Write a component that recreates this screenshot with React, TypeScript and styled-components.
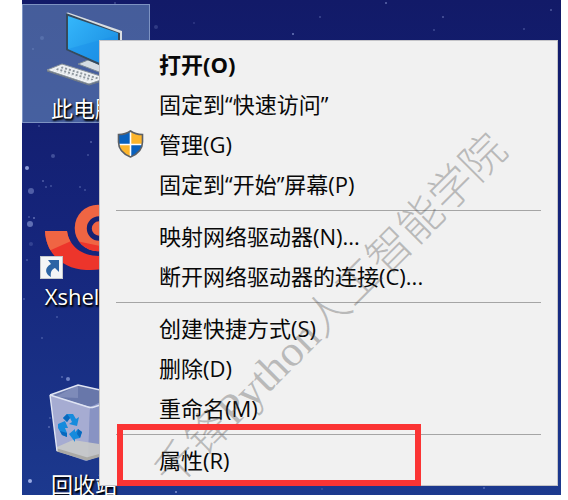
import React from "react";
import styled, { createGlobalStyle } from "styled-components";

const GlobalStyle = createGlobalStyle`
  * { box-sizing: border-box; }
  body {
    margin: 0;
    background: #fff;
    font-family: "Open Sans", "Noto Sans CJK SC", sans-serif;
    font-size: 22px;
  }
`;

const Desktop = styled.main`
  position: relative;
  height: calc(100vh - 5px);
  margin: 0 7px 5px 22px;
  padding-top: 4px;
  overflow: hidden;
  background: linear-gradient(#121a68, #15247a 45%, #1c398e);
`;

const Snow = styled.svg`
  position: absolute;
  inset: 0;
  width: 100%;
  height: 100%;
`;

const IconColumn = styled.div`
  position: relative;
  display: flex;
  flex-direction: column;
  align-items: flex-start;
  gap: 69px;
`;

const Shortcut = styled.button<{ $selected?: boolean }>`
  display: flex;
  flex-direction: column;
  align-items: flex-start;
  flex: none;
  width: 128px;
  padding: 0;
  border: 0;
  color: #fff;
  font: inherit;
  line-height: 30px;
  text-shadow: 1px 1px 2px #000, 1px 2px 2px #000;
  background: ${(p) => (p.$selected ? "rgba(140, 185, 225, 0.42)" : "transparent")};
  box-shadow: ${(p) => (p.$selected ? "inset 0 0 0 1px #7d93c2" : "none")};

  svg { display: block; width: 128px; height: 89px; }
`;

const ShortcutLabel = styled.span`
  align-self: center;
  padding-right: 4px;
`;

const Menu = styled.div`
  position: absolute;
  top: 40px;
  left: 77px;
  right: 3px;
  padding: 5px 0 4px;
  border: 1px solid #c4c4c8;
  background: #f1f1f1;
`;

const Group = styled.div`
  display: flex;
  flex-direction: column;
  gap: 1px;
`;

const Item = styled.button<{ $strong?: boolean }>`
  display: grid;
  grid-template-columns: 59px 1fr;
  align-items: center;
  height: 39px;
  padding: 0 0 4px;
  border: 0;
  background: transparent;
  color: #080808;
  font: inherit;
  font-weight: ${(p) => (p.$strong ? 700 : 400)};
  line-height: 30px;
  text-align: left;
  white-space: nowrap;
`;

const IconCell = styled.span`
  display: flex;
  padding-left: 17px;
`;

const Divider = styled.hr`
  height: 1px;
  margin: 5px 16px 7px;
  border: 0;
  background: #a5a5a5;
`;

const Watermark = styled.div`
  position: absolute;
  top: 270px;
  left: 231px;
  transform: translate(-50%, -50%) rotate(-45deg);
  color: rgba(80, 80, 80, 0.35);
  font-family: "Liberation Serif", "Noto Sans CJK SC", serif;
  font-size: 44px;
  font-weight: 300;
  line-height: 48px;
  white-space: nowrap;
  pointer-events: none;
`;

const Highlight = styled.div`
  position: absolute;
  left: 17px;
  bottom: -1px;
  width: 304px;
  height: 62px;
  border: 6px solid #fb3434;
  pointer-events: none;
`;

const flakes = [
  [5, 168, 2, 0.8], [9, 191, 3, 0.4], [8, 224, 3, 0.5], [12, 218, 1, 0.5],
  [7, 217, 1, 0.3], [31, 156, 2, 0.3], [21, 181, 1, 0.4], [24, 187, 1, 0.3],
  [29, 186, 1, 0.3], [58, 187, 1, 0.3], [63, 190, 1, 0.3], [9, 244, 2, 0.2],
  [5, 260, 1, 0.3], [17, 126, 1, 0.3], [69, 142, 1, 0.4], [66, 155, 1, 0.3],
  [2, 299, 1, 0.3], [20, 338, 1, 0.3], [35, 317, 1, 0.3], [46, 379, 2, 0.6],
  [40, 377, 1, 0.4], [27, 427, 1, 0.4], [28, 418, 1, 0.3], [8, 481, 2, 0.9],
  [20, 38, 2, 0.2], [11, 49, 1, 0.25], [93, 3, 1, 0.3], [134, 27, 2, 0.2],
  [172, 23, 1, 0.2], [271, 34, 1, 0.6], [298, 17, 1, 0.3], [364, 3, 1, 0.5],
  [412, 30, 1, 0.3], [421, 17, 1, 0.4], [502, 29, 1, 0.3], [529, 10, 1, 0.4],
  [154, 492, 1, 0.7], [300, 489, 1, 0.2], [462, 488, 1, 0.4],
];

const Computer = () => (
  <svg viewBox="0 0 128 89" aria-hidden="true">
    <defs>
      <linearGradient id="screen" x1="0" y1="0" x2="1" y2="1">
        <stop offset="0" stopColor="#35b7fb" />
        <stop offset="1" stopColor="#1686dd" />
      </linearGradient>
      <pattern id="keys" width="4" height="3" patternUnits="userSpaceOnUse" patternTransform="rotate(17)">
        <rect width="4" height="3" fill="#eceff2" />
        <rect width="2" height="2" fill="#8e979e" />
      </pattern>
    </defs>
    <path d="M56 60 66 56 90 65V73L77 68Z" fill="#d5dce3" stroke="#7c8993" />
    <path d="M44 9 99 27V71L44 46Z" fill="#364a5c" />
    <path d="M44 9 46 8.5 100 27V71L98 70V29Z" fill="#d9dee2" />
    <path d="M46 12 96 29V67L46 45Z" fill="url(#screen)" />
    <path d="M46 45 96 31V67Z" fill="#1b8fe8" opacity=".45" />
    <path d="M25 66 40 60 85 74 67 80Z" fill="#eef1f4" stroke="#8b949b" />
    <path d="M31 66 41 62 79 74 67 77Z" fill="url(#keys)" />
    <path d="M25 67 67 81 80 77" fill="none" stroke="#747d84" />
  </svg>
);

const Xshell = () => (
  <svg viewBox="0 0 128 89" aria-hidden="true">
    <defs>
      <clipPath id="shell">
        <path d="M23 39H45C47 54 60 64 77 64H84V76C77 78 70 78 64 78 41 77 24 62 23 39Z" />
      </clipPath>
      <clipPath id="coil"><circle cx="76" cy="36" r="23.3" /></clipPath>
    </defs>
    <g clipPath="url(#shell)">
      <rect x="20" y="34" width="70" height="48" fill="#ed352b" />
      <path d="M20 30H65V42L29 58 20 62Z" fill="#f06543" />
    </g>
    <g clipPath="url(#coil)">
      <rect x="50" y="12" width="52" height="52" fill="#f06543" />
      <path d="M50 48 78 54 102 42V64H50Z" fill="#ed352b" />
    </g>
    <circle cx="77" cy="36.5" r="9.7" fill="#f06543" stroke="#152172" strokeWidth="5" />
    <rect x="18.5" y="64.5" width="22" height="22" fill="#f4f5f6" stroke="#c3c7cd" />
    <path d="M26 68H37V80L33 76C30 77 28 80 29 85 23 82 22 76 29 72Z" fill="#2c64a5" />
  </svg>
);

const RecycleBin = () => (
  <svg viewBox="0 0 128 89" aria-hidden="true">
    <path d="M28 15 56 5 96 14 90 72 64 81 35 71Z" fill="#8f9bcb" />
    <path d="M28 15 56 5 96 14 68 27Z" fill="#6877aa" />
    <path d="M56 5V18L33 17Z" fill="#7e8bb9" />
    <path d="M28 15 68 27 66 80 35 71Z" fill="#a6acd2" />
    <path d="M68 27 96 19 90 72 66 80Z" fill="#8893c3" />
    <path d="M35 67 51 60 90 66V72L64 80 35 71Z" fill="#c9cac9" opacity=".9" />
    <path d="M35 70 65 79 90 72" fill="none" stroke="#aaa9a5" strokeWidth="3" />
    <path d="M28 15 56 5 96 14M28 15 66 27Q69 28 72 27L96 19M28 15 35 71" fill="none" stroke="#dfe4f3" strokeWidth="1.4" />
    <g fill="#168bdd">
      <path d="M41 38 45 34H51L54 39 57 37 55 46 47 44 50 42 48 38 45 42Z" />
      <path d="M36 44 43 41 46 48 43 48 45 53V57L40 55 36 48Z" />
      <path d="M47 54 53 49V52L56 49 60 52 58 58 53 59V62Z" />
    </g>
    <path d="M41 38 45 34 48 38 45 42ZM45 53V57L40 55 38 51ZM56 49 60 52 58 58 55 54Z" fill="#0868be" />
  </svg>
);

const Shield = () => (
  <svg width="27" height="28" viewBox="0 0 27 28" aria-hidden="true">
    <defs>
      <clipPath id="shieldShape">
        <path d="M13.5 1C10 3.5 5.5 4.5 1.5 4.5V12C1.5 19 6 24 13.5 27 21 24 25.5 19 25.5 12V4.5C21.5 4.5 17 3.5 13.5 1Z" />
      </clipPath>
    </defs>
    <g clipPath="url(#shieldShape)">
      <path fill="#0a61bd" d="M0 0H13V14H0ZM14 14H27V28H14Z" />
      <path fill="#fdb52c" d="M14 0H27V14H14ZM0 14H13V28H0Z" />
      <path d="M13.5 0V28M0 14.5H27" stroke="#fff" strokeWidth="1.6" />
    </g>
    <path d="M13.5 1C10 3.5 5.5 4.5 1.5 4.5V12C1.5 19 6 24 13.5 27 21 24 25.5 19 25.5 12V4.5C21.5 4.5 17 3.5 13.5 1Z" fill="none" stroke="#5c6066" strokeWidth="1.6" />
  </svg>
);

type Entry = { label: string; strong?: boolean; shield?: boolean };

const groups: Entry[][] = [
  [
    { label: "打开(O)", strong: true },
    { label: "固定到“快速访问”" },
    { label: "管理(G)", shield: true },
    { label: "固定到“开始”屏幕(P)" },
  ],
  [{ label: "映射网络驱动器(N)..." }, { label: "断开网络驱动器的连接(C)..." }],
  [{ label: "创建快捷方式(S)" }, { label: "删除(D)" }, { label: "重命名(M)" }],
  [{ label: "属性(R)" }],
];

export default function App() {
  return (
    <>
      <GlobalStyle />
      <Desktop>
        <Snow aria-hidden="true">
          {flakes.map(([x, y, r, o]) => (
            <circle key={`${x}-${y}`} cx={x} cy={y} r={r} fill="#a9b9ee" opacity={o} />
          ))}
        </Snow>
        <IconColumn>
          <Shortcut $selected>
            <Computer />
            <ShortcutLabel>此电脑</ShortcutLabel>
          </Shortcut>
          <Shortcut>
            <Xshell />
            <ShortcutLabel>Xshell 6</ShortcutLabel>
          </Shortcut>
          <Shortcut>
            <RecycleBin />
            <ShortcutLabel>回收站</ShortcutLabel>
          </Shortcut>
        </IconColumn>
        <Menu role="menu">
          {groups.map((group, index) => (
            <React.Fragment key={group[0].label}>
              {index > 0 && <Divider />}
              <Group role="group">
                {group.map((entry) => (
                  <Item key={entry.label} role="menuitem" $strong={entry.strong}>
                    <IconCell>{entry.shield && <Shield />}</IconCell>
                    <span>{entry.label}</span>
                  </Item>
                ))}
              </Group>
            </React.Fragment>
          ))}
          <Watermark>千锋Python人工智能学院</Watermark>
          <Highlight />
        </Menu>
      </Desktop>
    </>
  );
}
